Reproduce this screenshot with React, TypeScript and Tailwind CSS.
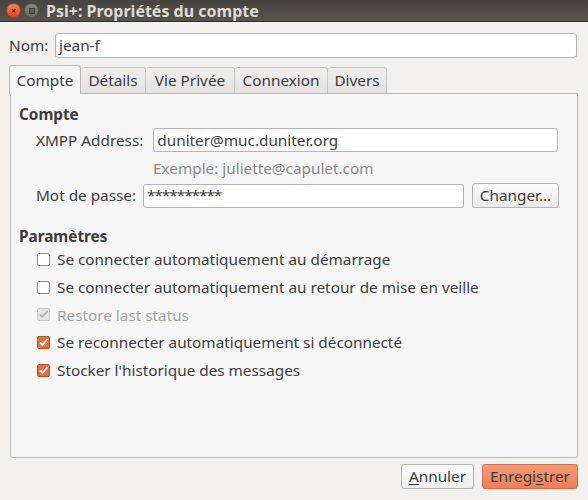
import React from "react";

function Check({ state }: { state: "off" | "on" | "disabled" }) {
  if (state === "off") {
    return (
      <span className="inline-block h-[13px] w-[13px] shrink-0 rounded-[2px] border border-[#8c8c8c] bg-white" />
    );
  }
  const on = state === "on";
  return (
    <span
      className={
        on
          ? "flex h-[13px] w-[13px] shrink-0 items-center justify-center rounded-[2px] border border-[#b9532f] bg-[#e4703f]"
          : "flex h-[13px] w-[13px] shrink-0 items-center justify-center rounded-[2px] border border-[#c6c6c6] bg-[#e6e6e6]"
      }
    >
      <svg width="11" height="11" viewBox="0 0 11 11">
        <path
          d="M2 5.5 L4.5 8 L9.5 2"
          fill="none"
          stroke={on ? "#ffffff" : "#b0b0b0"}
          strokeWidth="1.8"
        />
      </svg>
    </span>
  );
}

const tabs = [
  { label: "Compte", w: "w-[72px]" },
  { label: "Détails", w: "w-[65px]" },
  { label: "Vie Privée", w: "w-[89px]" },
  { label: "Connexion", w: "w-[93px]" },
  { label: "Divers", w: "w-[59px]" },
];

const options: { label: string; state: "off" | "on" | "disabled" }[] = [
  { label: "Se connecter automatiquement au démarrage", state: "off" },
  { label: "Se connecter automatiquement au retour de mise en veille", state: "off" },
  { label: "Restore last status", state: "disabled" },
  { label: "Se reconnecter automatiquement si déconnecté", state: "on" },
  { label: "Stocker l'historique des messages", state: "on" },
];

export default function App() {
  return (
    <div className="flex h-[500px] w-[588px] flex-col overflow-hidden bg-[#f2f1f0] font-['Noto_Sans',sans-serif] text-[15.3px] text-[#3c3c3c]">
      {/* title bar */}
      <div className="flex h-[22px] shrink-0 items-center border-b border-[#2f2e2b] bg-gradient-to-b from-[#46443f] to-[#57544e] pl-[6px]">
        <span className="flex h-[15px] w-[15px] items-center justify-center rounded-full border border-[#a8401c] bg-gradient-to-b from-[#f4825a] to-[#d9471b] text-[9px] font-bold leading-none text-[#5a1a08]">
          ×
        </span>
        <span className="ml-[3px] flex h-[15px] w-[15px] items-center justify-center rounded-full border border-[#55534f] bg-gradient-to-b from-[#8a8781] to-[#6c6a65]">
          <span className="h-[6px] w-[6px] border border-[#3f3d39] bg-[#5e5c57]" />
        </span>
        <span className="ml-[7px] text-[16px] font-bold leading-none text-[#dfdbd2]">
          Psi+: Propriétés du compte
        </span>
      </div>

      {/* name */}
      <div className="mt-[11px] flex items-center pl-[9px] pr-[11px]">
        <span className="w-[46px]">Nom:</span>
        <div className="flex h-[25px] flex-1 items-center rounded-[3px] border border-[#b4b4b4] bg-white pl-[3px]">
          jean-f
        </div>
      </div>

      {/* tabs */}
      <div className="mt-[7px] flex h-[28px] items-end pl-[9px]">
        {tabs.map((t, i) =>
          i === 0 ? (
            <div
              key={t.label}
              className={`relative z-10 -mb-px flex h-[29px] items-center justify-center rounded-t-[3px] border border-b-0 border-[#b8b8b8] bg-[#f6f6f6] ${t.w}`}
            >
              {t.label}
            </div>
          ) : (
            <div
              key={t.label}
              className={`flex h-[26px] items-center justify-center rounded-t-[3px] border border-l-0 border-b-0 border-[#c4c4c4] bg-gradient-to-b from-[#f0efee] to-[#e3e2e1] ${t.w}`}
            >
              {t.label}
            </div>
          )
        )}
      </div>

      {/* panel */}
      <div className="ml-[10px] mr-[10px] flex h-[365px] flex-col rounded-b-[2px] border border-[#b8b8b8] bg-[#f6f6f6] pl-[8px]">
        <div className="mt-[10px] font-bold leading-[20px]">Compte</div>
        <div className="mt-[4px] flex items-center pl-[17px]">
          <span>XMPP Address:</span>
          <div className="ml-[10px] flex h-[24px] w-[405px] items-center rounded-[3px] border border-[#b4b4b4] bg-white pl-[3px]">
            duniter@muc.duniter.org
          </div>
        </div>
        <div className="mt-[5px] pl-[134px] leading-[22px] text-[#8a8a8a]">
          Exemple: juliette@capulet.com
        </div>
        <div className="mt-[4px] flex items-center pl-[17px]">
          <span>Mot de passe:</span>
          <div className="ml-[7px] flex h-[24px] w-[321px] items-center rounded-[3px] border border-[#b4b4b4] bg-white pl-[3px] tracking-[-1px]">
            **********
          </div>
          <div className="ml-[8px] flex h-[25px] w-[87px] items-center justify-center rounded-[3px] border border-[#b4b4b4] bg-gradient-to-b from-[#fafafa] to-[#eaeaea]">
            Changer...
          </div>
        </div>

        <div className="mt-[18px] font-bold leading-[20px]">Paramètres</div>
        <div className="flex flex-col pl-[18px]">
          {options.map((o) => (
            <div key={o.label} className="flex h-[27.6px] items-center gap-[7px]">
              <Check state={o.state} />
              <span className={o.state === "disabled" ? "text-[#a3a3a3]" : ""}>
                {o.label}
              </span>
            </div>
          ))}
        </div>
      </div>

      {/* buttons */}
      <div className="mt-[6px] flex justify-end gap-[8px] pr-[10px]">
        <div className="flex h-[25px] w-[73px] items-center justify-center rounded-[3px] border border-[#b4b4b4] bg-gradient-to-b from-[#fcfcfc] to-[#ededed]">
          <span>
            <span className="underline underline-offset-2">A</span>nnuler
          </span>
        </div>
        <div className="flex h-[25px] w-[96px] items-center justify-center rounded-[3px] border border-[#d0714b] bg-gradient-to-b from-[#f69a78] to-[#ee7f58]">
          <span>
            Enregi<span className="underline underline-offset-2">s</span>trer
          </span>
        </div>
      </div>
    </div>
  );
}
